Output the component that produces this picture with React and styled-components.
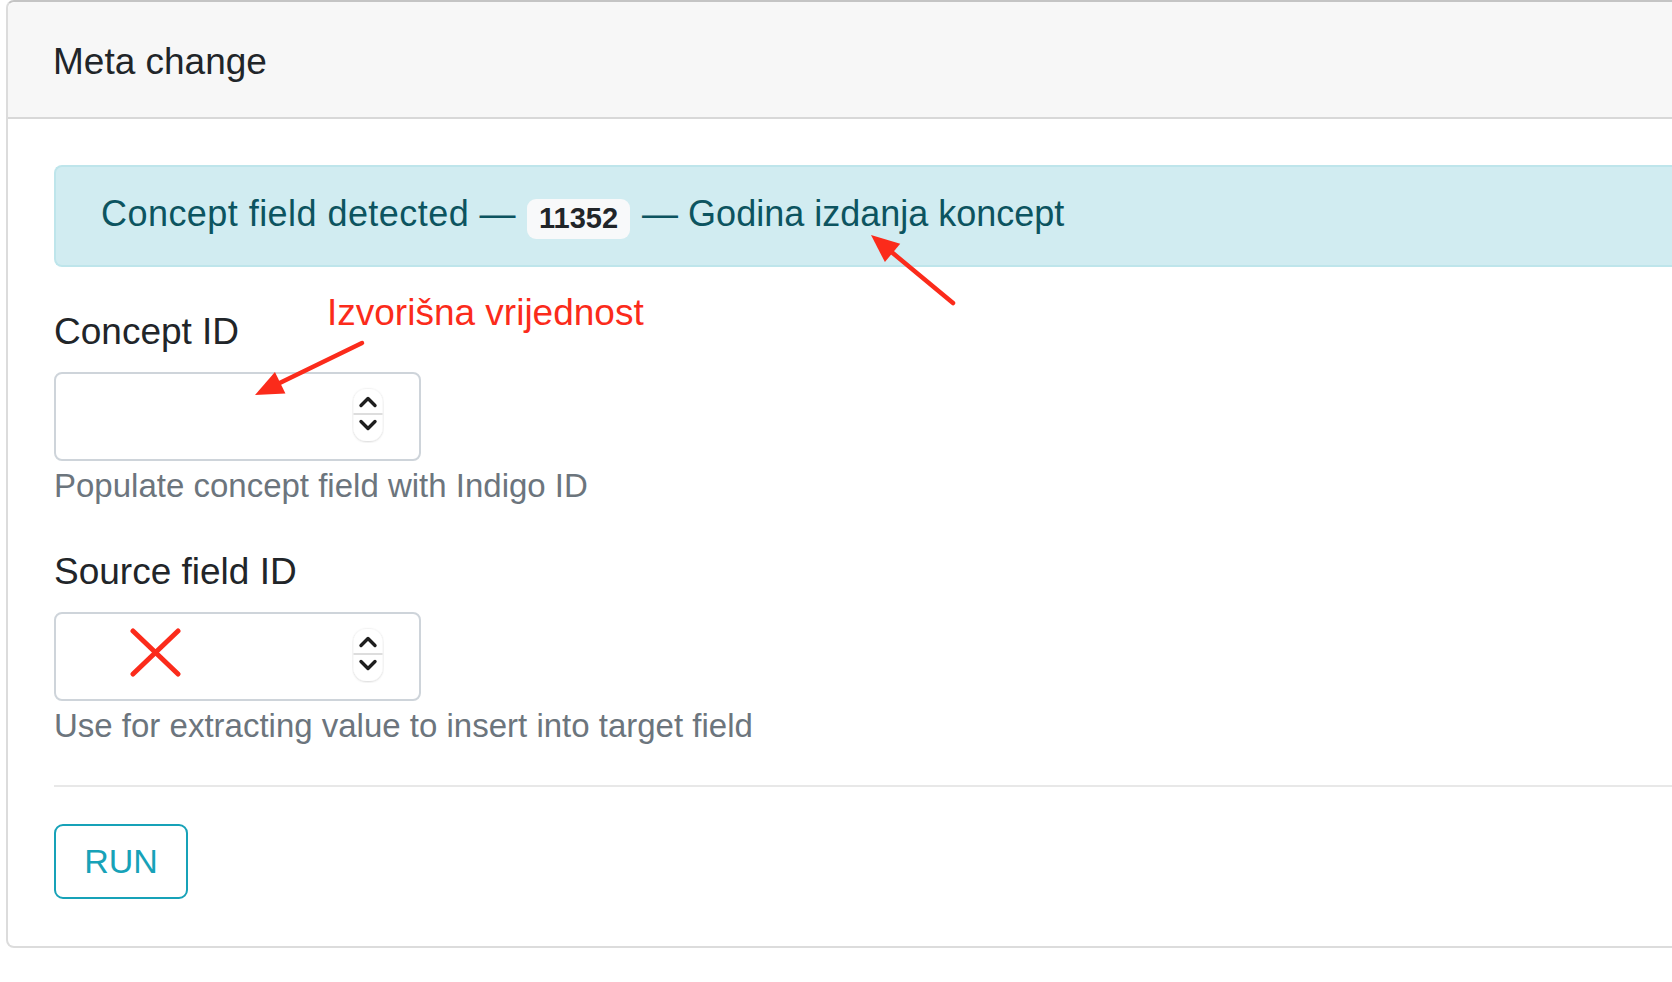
import React from "react";
import styled, { createGlobalStyle } from "styled-components";

const RED = "#fb2b1b";

const GlobalStyle = createGlobalStyle`
  html, body {
    margin: 0;
    padding: 0;
    background: #fff;
  }
  body {
    font-family: "Liberation Sans", Arial, Helvetica, sans-serif;
    color: #212529;
    overflow: hidden;
  }
`;

function arrowHead(x1, y1, x2, y2, len = 28, half = 12) {
  const dx = x2 - x1;
  const dy = y2 - y1;
  const d = Math.hypot(dx, dy);
  const ux = dx / d;
  const uy = dy / d;
  const bx = x2 - ux * len;
  const by = y2 - uy * len;
  return {
    shaftEnd: [x2 - ux * (len - 4), y2 - uy * (len - 4)],
    points: `${x2},${y2} ${bx - uy * half},${by + ux * half} ${bx + uy * half},${by - ux * half}`,
  };
}

function Arrow({ from, to }) {
  const head = arrowHead(from[0], from[1], to[0], to[1]);
  return (
    <g>
      <line
        x1={from[0]}
        y1={from[1]}
        x2={head.shaftEnd[0]}
        y2={head.shaftEnd[1]}
        stroke={RED}
        strokeWidth="4.5"
        strokeLinecap="round"
      />
      <polygon points={head.points} fill={RED} />
    </g>
  );
}

function Spinner() {
  return (
    <SpinnerSvg width="32" height="56" viewBox="0 0 32 56">
      <defs>
        <filter id="sp-shadow" x="-30%" y="-30%" width="160%" height="160%">
          <feDropShadow dx="0" dy="0.5" stdDeviation="1" floodColor="#000" floodOpacity="0.22" />
        </filter>
      </defs>
      <rect x="1.5" y="2" width="29" height="52" rx="13" fill="#fff" filter="url(#sp-shadow)" />
      <line x1="1.5" y1="27" x2="30.5" y2="27" stroke="#d2d2d2" strokeWidth="1.5" />
      <path d="M9 18.5 L16 11.5 L23 18.5" fill="none" stroke="#1e1e1e" strokeWidth="3.4" strokeLinecap="round" strokeLinejoin="round" />
      <path d="M9 34.5 L16 41.5 L23 34.5" fill="none" stroke="#1e1e1e" strokeWidth="3.4" strokeLinecap="round" strokeLinejoin="round" />
    </SpinnerSvg>
  );
}

function NumberField({ crossed }) {
  return (
    <InputBox>
      <Input type="text" aria-label="number" />
      <Spinner />
      {crossed && (
        <Cross width="52" height="52" viewBox="0 0 52 52">
          <path d="M4 4 L49 47 M49 4 L4 47" stroke={RED} strokeWidth="5" strokeLinecap="round" />
        </Cross>
      )}
    </InputBox>
  );
}

export default function App() {
  return (
    <Page>
      <GlobalStyle />
      <Card>
        <CardHeader>Meta change</CardHeader>
        <CardBody>
          <Alert>
            <Lead>Concept field detected —</Lead> <Badge>11352</Badge> — Godina izdanja koncept
          </Alert>

          <FormGroup>
            <Label>Concept ID</Label>
            <NumberField />
            <HelpText>Populate concept field with Indigo ID</HelpText>
          </FormGroup>

          <FormGroup>
            <Label>Source field ID</Label>
            <NumberField crossed />
            <HelpText>Use for extracting value to insert into target field</HelpText>
          </FormGroup>

          <Divider />

          <RunButton type="button">RUN</RunButton>
        </CardBody>
      </Card>

      <Note>Izvorišna vrijednost</Note>
      <Overlay width="1672" height="982" viewBox="0 0 1672 982">
        <Arrow from={[362, 343]} to={[255, 395]} />
        <Arrow from={[953, 303]} to={[871, 235]} />
      </Overlay>
    </Page>
  );
}

const Page = styled.div`
  position: relative;
  width: 1672px;
  height: 982px;
  overflow: hidden;
  padding-left: 6px;
  box-sizing: border-box;
`;

const Card = styled.div`
  width: 1720px;
  box-sizing: border-box;
  border: 2px solid #dcdcdc;
  border-top-color: #c4c4c4;
  border-radius: 8px;
  background: #fff;
`;

const CardHeader = styled.div`
  background: #f7f7f7;
  border-bottom: 2px solid #d8d8d8;
  border-radius: 8px 8px 0 0;
  padding: 33px 0 28px 45px;
  font-size: 37px;
  line-height: 54px;
  color: #212529;
`;

const CardBody = styled.div`
  padding: 46px 0 47px 46px;
`;

const Alert = styled.div`
  background: #d1ecf1;
  border: 2px solid #bee5eb;
  border-right: none;
  border-radius: 8px 0 0 8px;
  color: #0c5460;
  font-size: 36px;
  line-height: 54px;
  padding: 20px 0 24px 45px;
  margin-bottom: 38px;
  white-space: nowrap;
`;

const Lead = styled.span`
  letter-spacing: 0.45px;
`;

const Badge = styled.span`
  display: inline-block;
  background: #f8f9fa;
  color: #212529;
  font-weight: 700;
  font-size: 29px;
  line-height: 29px;
  padding: 5px 12px 6px;
  border-radius: 9px;
  vertical-align: -2px;
  margin: 0 2px 0 1px;
`;

const FormGroup = styled.div`
  margin-bottom: 35px;
`;

const Label = styled.label`
  display: block;
  font-size: 37px;
  line-height: 54px;
  color: #212529;
  margin-bottom: 13px;
`;

const InputBox = styled.div`
  position: relative;
  width: 367px;
  height: 89px;
  box-sizing: border-box;
  border: 2px solid #ced4da;
  border-radius: 8px;
  display: flex;
  align-items: center;
  padding: 0 35px 4px 0;
  background: #fff;
`;

const Input = styled.input`
  flex: 1;
  min-width: 0;
  height: 100%;
  border: none;
  outline: none;
  background: transparent;
  font: inherit;
  font-size: 32px;
  padding: 0 24px;
`;

const SpinnerSvg = styled.svg`
  display: block;
  flex: none;
`;

const Cross = styled.svg`
  position: absolute;
  left: 73px;
  top: 13px;
`;

const HelpText = styled.div`
  font-size: 33px;
  line-height: 49px;
  color: #6c757d;
`;

const Divider = styled.hr`
  border: none;
  border-top: 2px solid #e8e8e8;
  margin: 0 0 37px 0;
`;

const RunButton = styled.button`
  display: block;
  box-sizing: border-box;
  width: 134px;
  height: 75px;
  border: 2px solid #17a2b8;
  border-radius: 9px;
  background: #fff;
  color: #17a2b8;
  font-family: "Liberation Sans", Arial, sans-serif;
  font-size: 34px;
  padding: 0;
`;

const Note = styled.span`
  position: absolute;
  left: 327px;
  top: 291px;
  font-size: 37px;
  line-height: 44px;
  color: ${RED};
  white-space: nowrap;
`;

const Overlay = styled.svg`
  position: absolute;
  left: 0;
  top: 0;
  pointer-events: none;
`;
